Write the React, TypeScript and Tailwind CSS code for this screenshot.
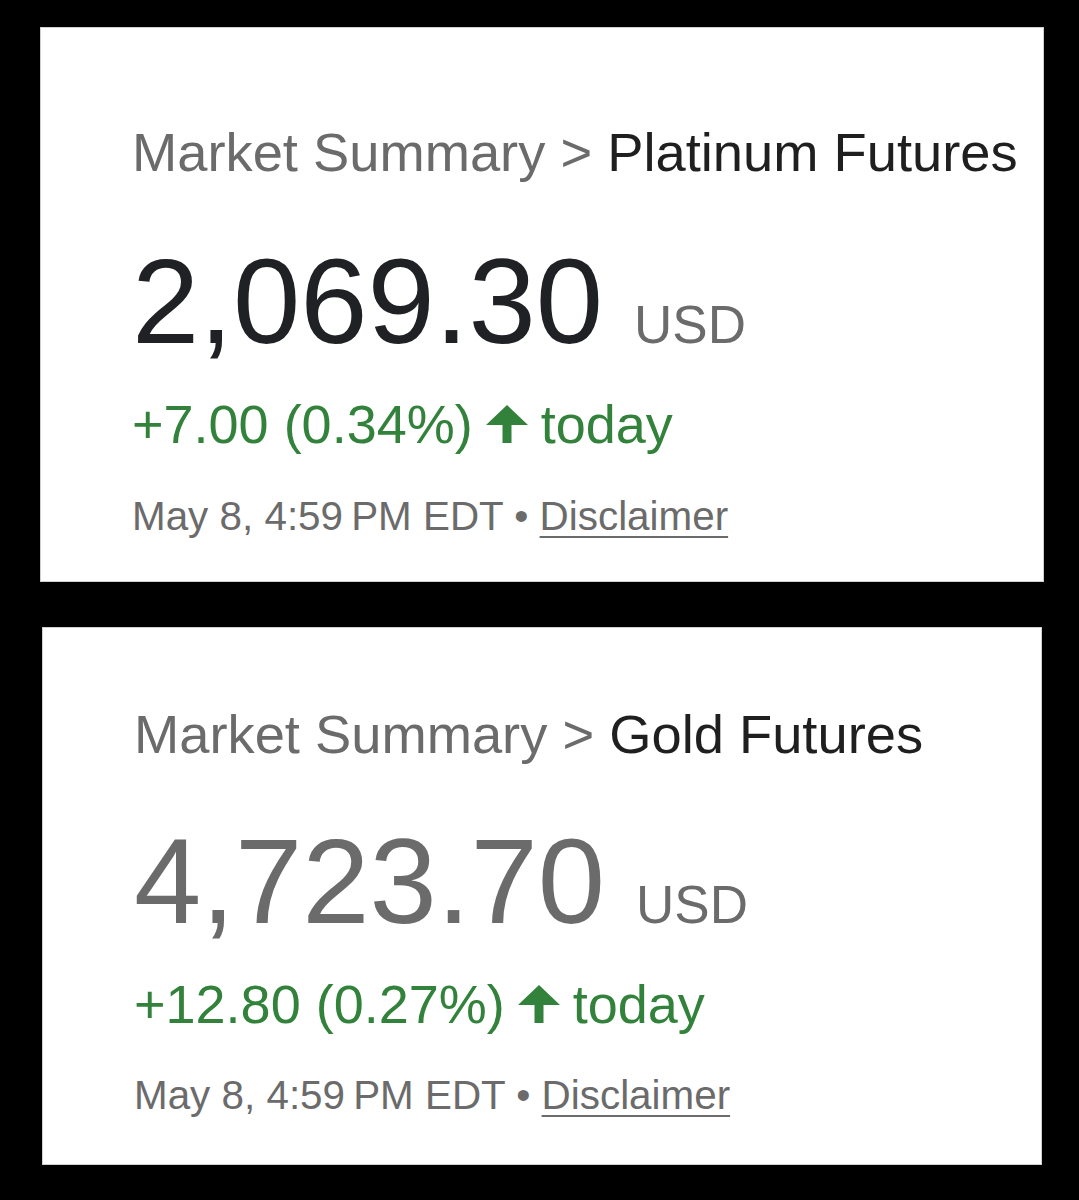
const font = { fontFamily: '"Liberation Sans", Arial, sans-serif' };

type Quote = {
  name: string;
  price: string;
  change: string;
  priceColor: string;
  card: string;
  gaps: { number: string; change: string; date: string };
};

const quotes: Quote[] = [
  {
    name: "Platinum Futures",
    price: "2,069.30",
    change: "+7.00 (0.34%)",
    priceColor: "text-[#202124]",
    card: "ml-[40px] mt-[27px] w-[1004px] pt-[98px] pb-[44px]",
    gaps: { number: "mt-[61px]", change: "mt-[35px]", date: "mt-[45px]" },
  },
  {
    name: "Gold Futures",
    price: "4,723.70",
    change: "+12.80 (0.27%)",
    priceColor: "text-[#6b6b6b]",
    card: "ml-[42px] mt-[45px] w-[1000px] pt-[80px] pb-[49px]",
    gaps: { number: "mt-[59px]", change: "mt-[35px]", date: "mt-[44px]" },
  },
];

function UpArrow() {
  return (
    <svg width="42" height="38" viewBox="0 0 42 38" className="mx-[13px] shrink-0">
      <polygon points="21,0 42,20 25.5,20 25.5,38 16.5,38 16.5,20 0,20" fill="#33823b" />
    </svg>
  );
}

function QuoteCard({ q }: { q: Quote }) {
  return (
    <section className={`${q.card} border border-[#cfcfcf] bg-white pl-[91px]`}>
      <h2 className="text-[54.3px] leading-none whitespace-nowrap text-[#6b6b6b]">
        Market Summary &gt; <span className="text-[#1f1f1f]">{q.name}</span>
      </h2>

      <div className={`${q.gaps.number} flex items-baseline`}>
        <span className={`text-[121px] leading-none ${q.priceColor}`}>{q.price}</span>
        <span className="ml-[31px] text-[53px] leading-none text-[#6b6b6b]">USD</span>
      </div>

      <div className={`${q.gaps.change} flex items-center text-[54px] leading-none text-[#33823b]`}>
        <span>{q.change}</span>
        <UpArrow />
        <span>today</span>
      </div>

      <p className={`${q.gaps.date} text-[40.4px] leading-none text-[#6b6b6b] whitespace-nowrap`}>
        May 8, 4:59{"\u2009"}PM EDT • {" "}
        <span className="underline decoration-2 underline-offset-[6px]">Disclaimer</span>
      </p>
    </section>
  );
}

export default function App() {
  return (
    <div style={font} className="h-[1200px] w-[1079px] overflow-hidden bg-black">
      {quotes.map((q) => (
        <QuoteCard key={q.name} q={q} />
      ))}
    </div>
  );
}
